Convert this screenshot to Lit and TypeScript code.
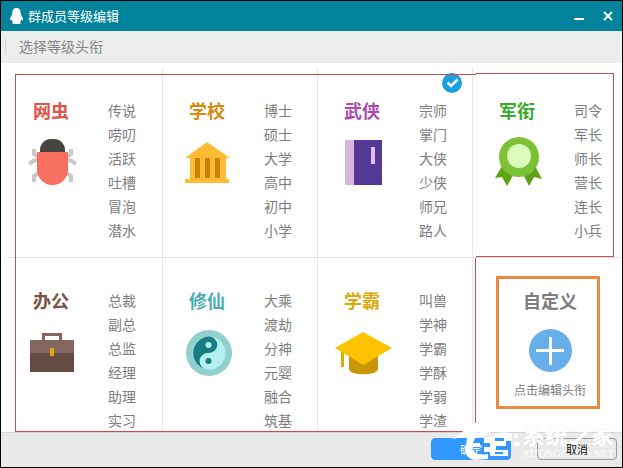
import { LitElement, html, css, svg, nothing } from "lit";
import { customElement } from "lit/decorators.js";
import { classMap } from "lit/directives/class-map.js";

interface RankSet {
  key: string;
  name: string;
  ranks: string[];
  selected?: boolean;
}

const SETS: RankSet[] = [
  { key: "bug", name: "网虫", ranks: ["传说", "唠叨", "活跃", "吐槽", "冒泡", "潜水"] },
  { key: "school", name: "学校", ranks: ["博士", "硕士", "大学", "高中", "初中", "小学"] },
  { key: "book", name: "武侠", ranks: ["宗师", "掌门", "大侠", "少侠", "师兄", "路人"], selected: true },
  { key: "medal", name: "军衔", ranks: ["司令", "军长", "师长", "营长", "连长", "小兵"] },
  { key: "office", name: "办公", ranks: ["总裁", "副总", "总监", "经理", "助理", "实习"] },
  { key: "taiji", name: "修仙", ranks: ["大乘", "渡劫", "分神", "元婴", "融合", "筑基"] },
  { key: "cap", name: "学霸", ranks: ["叫兽", "学神", "学霸", "学酥", "学弱", "学渣"] },
];

const ICONS: Record<string, unknown> = {
  bug: svg`
    <g fill="none" stroke="#c9c9c9" stroke-width="4">
      <path d="M11 19v5l6 4M6 34l5-3.500h5M11 52v-6l6-4"/>
      <path d="M48 19v5l-6 4M53 34l-5-3.500h-5M48 52v-6l-6-4"/>
    </g>
    <path d="M17 22v-2a11 11 0 0 1 11-11h3a11 11 0 0 1 11 11v2z" fill="#454440"/>
    <path d="M14 22h31v17.500a15.500 15.500 0 0 1-31 0z" fill="#f76f5e"/>`,
  school: svg`
    <path d="M28 12 51 28H6z" fill="#fdbc33"/>
    <path d="M11 27h36v22h3v4H6v-4h5z" fill="#fdbc33"/>
    <path d="M16 28h5v20h-5zM26 28h5v20h-5zM36 28h5v20h-5z" fill="#cc800b"/>`,
  book: svg`
    <path d="M11 10h10v45H11z" fill="#d9b6de"/>
    <path d="M20 10h28v45H20z" fill="#533995"/>
    <path d="M37 17h4v17h-4z" fill="#e0bde8"/>`,
  medal: svg`
    <path d="M13 36 6 48l7-1 5 9 9-16z" fill="#5fa213"/>
    <path d="M46 36l7 13-8-2-5 9-8-16z" fill="#5fa213"/>
    <circle cx="30" cy="27" r="20" fill="#7dc137"/>
    <circle cx="30" cy="26" r="12" fill="#ddfdbd"/>`,
  office: svg`
    <path d="M20.500 22v-7.500h17V22" fill="none" stroke="#84655f" stroke-width="3"/>
    <path d="M7 20h44v14H7z" fill="#84655f"/>
    <path d="M7 33h44v19H7z" fill="#644c44"/>
    <path d="M27 28h4v8h-4z" fill="#e0aa04"/>`,
  taiji: svg`
    <circle cx="30" cy="33" r="23" fill="#93cfcf"/>
    <circle cx="30" cy="33" r="16.500" fill="#b4f0f1"/>
    <path d="M30 16.500a8.250 8.250 0 0 1 0 16.500a8.250 8.250 0 0 0-5 15.500a16.500 16.500 0 0 1 5-32z" fill="#167d83"/>
    <circle cx="29.500" cy="25" r="3" fill="#b4f0f1"/>
    <circle cx="29.500" cy="41" r="3" fill="#167d83"/>`,
  cap: svg`
    <path d="M15 36h29v13c0 7-29 7-29 0z" fill="#c99705"/>
    <path d="M7 29h3v18H7z" fill="#e0a904"/>
    <path d="M29 12 58 28 29 45 1 28z" fill="#fcc302"/>`,
};

@customElement("rank-card")
class RankCard extends LitElement {
  static properties = { data: { attribute: false } };
  declare data: RankSet;

  static styles = css`
    :host {
      display: flex;
      position: relative;
      padding: 30px 0 0 16px;
      box-sizing: border-box;
    }
    .label {
      width: 85px;
      flex: none;
    }
    .name {
      margin: 0 0 8px 10px;
      font-size: 18px;
      line-height: 24px;
      font-weight: 700;
    }
    .icon {
      display: block;
      width: 60px;
      height: 60px;
    }
    .ranks {
      margin: 0;
      padding: 0;
      list-style: none;
      font-size: 14px;
      line-height: 24px;
      color: #7d7d7d;
      white-space: nowrap;
    }
    .check {
      position: absolute;
      top: 5px;
      right: 10px;
      width: 20px;
      height: 20px;
    }
    .bug { color: #dc5548; }
    .school { color: #d98a0c; }
    .book { color: #a94bab; }
    .medal { color: #37ab28; }
    .office { color: #7a5244; }
    .taiji { color: #4badb0; }
    .cap { color: #dca90a; }
  `;

  render() {
    const d = this.data;
    return html`
      <div class="label">
        <h2 class=${classMap({ name: true, [d.key]: true })}>${d.name}</h2>
        <svg class="icon" viewBox="0 0 60 60" aria-hidden="true">${ICONS[d.key]}</svg>
      </div>
      <ul class="ranks">${d.ranks.map((r) => html`<li>${r}</li>`)}</ul>
      ${d.selected
        ? html`<svg class="check" viewBox="0 0 20 20" role="img" aria-label="已选择">
            <circle cx="10" cy="10" r="10" fill="#1aa0dc" />
            <path d="M5.500 9.500 9 13l6.500-6.500" fill="none" stroke="#fff" stroke-width="2.500" />
          </svg>`
        : nothing}
    `;
  }
}

@customElement("app-root")
class AppRoot extends LitElement {
  static styles = css`
    :host {
      display: block;
      font-family: "Noto Sans CJK SC", "Liberation Sans", sans-serif;
    }
    .window {
      display: flex;
      flex-direction: column;
      position: relative;
      min-height: 100vh;
      box-sizing: border-box;
      border: 1px solid #000;
      background: #fff;
      overflow: hidden;
    }
    button {
      font-family: inherit;
      padding: 0;
    }
    .titlebar {
      display: flex;
      align-items: center;
      height: 30px;
      padding: 0 4px 0 8px;
      background: #02839b;
      color: #fff;
    }
    .penguin {
      width: 16px;
      height: 18px;
      margin-right: 3px;
    }
    .title {
      flex: 1;
      margin: 0;
      font-size: 13px;
      line-height: 20px;
      font-weight: 400;
    }
    .control {
      display: flex;
      align-items: center;
      justify-content: center;
      width: 20px;
      height: 20px;
      margin-left: 9px;
      border: 0;
      background: none;
    }
    .control svg {
      width: 10px;
      height: 10px;
    }
    .subheader {
      display: flex;
      align-items: center;
      height: 32px;
      box-sizing: border-box;
      padding: 0 0 2px 4px;
      background: #ebeeed;
      font-size: 14px;
      line-height: 20px;
      color: #858585;
    }
    .subheader p {
      margin: 0;
      padding-left: 13px;
    }
    .tick {
      width: 1px;
      height: 16px;
      background: #cfd1d1;
    }
    .grid {
      display: grid;
      grid-template-columns: 156fr 155fr 155fr 149fr;
      grid-template-rows: 190px 174px;
      padding: 5px 0 0 6px;
      flex: 1;
    }
    .cell {
      border-right: 1px solid #e6e6e6;
    }
    .last {
      border-right: 0;
    }
    .upper {
      border-bottom: 1px solid #e6e6e6;
    }
    .c1 { grid-column: 1; }
    .c2 { grid-column: 2; }
    .c3 { grid-column: 3; }
    .c4 { grid-column: 4; }
    .r1 { grid-row: 1; }
    .r2 { grid-row: 2; }
    .custom {
      grid-column: 4;
      grid-row: 2;
      justify-self: start;
      align-self: start;
      display: flex;
      flex-direction: column;
      align-items: center;
      box-sizing: border-box;
      width: 104px;
      height: 133px;
      margin: 18px 0 0 23px;
      padding: 9px 0 0 4px;
      border: 3px solid #ea8b42;
      background: #fff;
      color: #7d7d7d;
    }
    .custom-name {
      font-size: 18px;
      line-height: 24px;
      font-weight: 700;
    }
    .plus {
      width: 43px;
      height: 43px;
      margin: 17px 0 10px;
    }
    .hint {
      font-size: 12px;
      line-height: 16px;
      white-space: nowrap;
    }
    .mark {
      pointer-events: none;
      border: 0 solid #cf4a4d;
      z-index: 1;
    }
    .mark-sets {
      grid-column: 1 / 4;
      grid-row: 1 / 3;
      margin: 6px -3px 0 8px;
      border-width: 1px 0 1px 1px;
    }
    .mark-corner {
      grid-column: 4;
      grid-row: 1;
      margin: 5px 8px 1px 3px;
      border-width: 1px 1px 1px 0;
    }
    .mark-side {
      grid-column: 4;
      grid-row: 2;
      justify-self: start;
      margin-left: 2px;
      border-width: 0 0 0 1px;
    }
    .footer {
      display: flex;
      justify-content: flex-end;
      gap: 26px;
      height: 35px;
      box-sizing: border-box;
      padding: 5px 5px 0 0;
      border-top: 1px solid #d5d5d5;
      background: #eaeaea;
    }
    .action {
      width: 80px;
      height: 22px;
      box-sizing: border-box;
      border: 1px solid #9b9b9b;
      border-radius: 4px;
      background: #e9e9e9;
      color: #111;
      font-size: 11px;
      line-height: 18px;
    }
    .cancel-text {
      position: relative;
      z-index: 3;
    }
    .primary {
      border-color: #3398fd;
      background: #3398fd;
      color: #fff;
    }
    .watermark {
      position: absolute;
      right: 8px;
      bottom: 4px;
      display: flex;
      align-items: flex-start;
      gap: 2px;
      color: #fff;
      pointer-events: none;
      z-index: 2;
    }
    .watermark svg {
      width: 68px;
      height: 42px;
    }
    .brand {
      display: flex;
      flex-direction: column;
      align-items: center;
    }
    .brand-name {
      font-size: 23px;
      line-height: 26px;
      font-weight: 700;
      text-shadow: 0 0 1px #ddd;
    }
    .brand-site {
      font-family: "Liberation Serif", serif;
      font-size: 10px;
      line-height: 14px;
    }
  `;

  render() {
    return html`
      <main class="window">
        <header class="titlebar">
          <svg class="penguin" viewBox="0 0 16 18" aria-hidden="true">
            <path
              d="M7.500 1C4.500 1 3.300 3.200 3.300 6C3.300 8 1 10.200 1 12.500C1 13.500 1.600 13.800 2.800 12.700C3.100 13.900 3.600 14.500 4.200 15C2.500 16 3.500 17 5 17H10C11.500 17 12.500 16 10.800 15C11.400 14.500 11.900 13.900 12.200 12.700C13.400 13.800 14 13.500 14 12.500C14 10.200 11.700 8 11.700 6C11.700 3.200 10.500 1 7.500 1z"
              fill="#fff"
            />
          </svg>
          <h1 class="title">群成员等级编辑</h1>
          <button class="control" aria-label="最小化">
            <svg viewBox="0 0 10 10"><path d="M0 7h10v2H0z" fill="#fff" /></svg>
          </button>
          <button class="control" aria-label="关闭">
            <svg viewBox="0 0 10 10">
              <path d="M1 1l8 8M9 1l-8 8" stroke="#fff" stroke-width="2" />
            </svg>
          </button>
        </header>
        <div class="subheader">
          <span class="tick"></span>
          <p>选择等级头衔</p>
        </div>
        <section class="grid">
          ${SETS.map((s, i) => {
            const col = (i % 4) + 1;
            const row = i < 4 ? 1 : 2;
            return html`<rank-card
              class="cell c${col} r${row} ${row === 1 ? "upper" : ""} ${col === 4 ? "last" : ""}"
              .data=${s}
            ></rank-card>`;
          })}
          <button class="custom">
            <span class="custom-name">自定义</span>
            <svg class="plus" viewBox="0 0 43 43" aria-hidden="true">
              <circle cx="21.500" cy="21.500" r="21.500" fill="#68aee8" />
              <path d="M7 21.500h28M21.500 8v28" stroke="#fff" stroke-width="3" />
            </svg>
            <span class="hint">点击编辑头衔</span>
          </button>
          <div class="mark mark-sets"></div>
          <div class="mark mark-corner"></div>
          <div class="mark mark-side"></div>
        </section>
        <footer class="footer">
          <button class="action primary">确定</button>
          <button class="action"><span class="cancel-text">取消</span></button>
        </footer>
        <div class="watermark">
          <svg viewBox="0 0 68 42" aria-hidden="true">
            <path d="M28 11 43 2 56 9v7L43 9 30 17z" fill="#fff" opacity=".6" />
            <path
              d="M0 18C7 15 12 9 18 4C24 1 29 1 34 0C28 4 25 8 24 12L35 10V15L23 17L21 22H28V26H21C20 30 22 33 27 34L36 33V38L22 39C14 37 12 31 14 25L15 17C10 16 5 17 0 18z"
              fill="#fff"
            />
            <path
              d="M32 17 43 15V12H60V20H54V25H44V29H56V35H38V31H32V26H38V22H32z"
              fill="#fff"
            />
            <path d="M43 17h9v3H43zM43 31h8v2h-8z" fill="#3398fd" />
            <path d="M62 13h4v4h-4zM62 21h5v4h-5z" fill="#fff" />
          </svg>
          <div class="brand">
            <span class="brand-name">系统之家</span>
            <span class="brand-site">XITONGZHIJIA.NET</span>
          </div>
        </div>
      </main>
    `;
  }
}
